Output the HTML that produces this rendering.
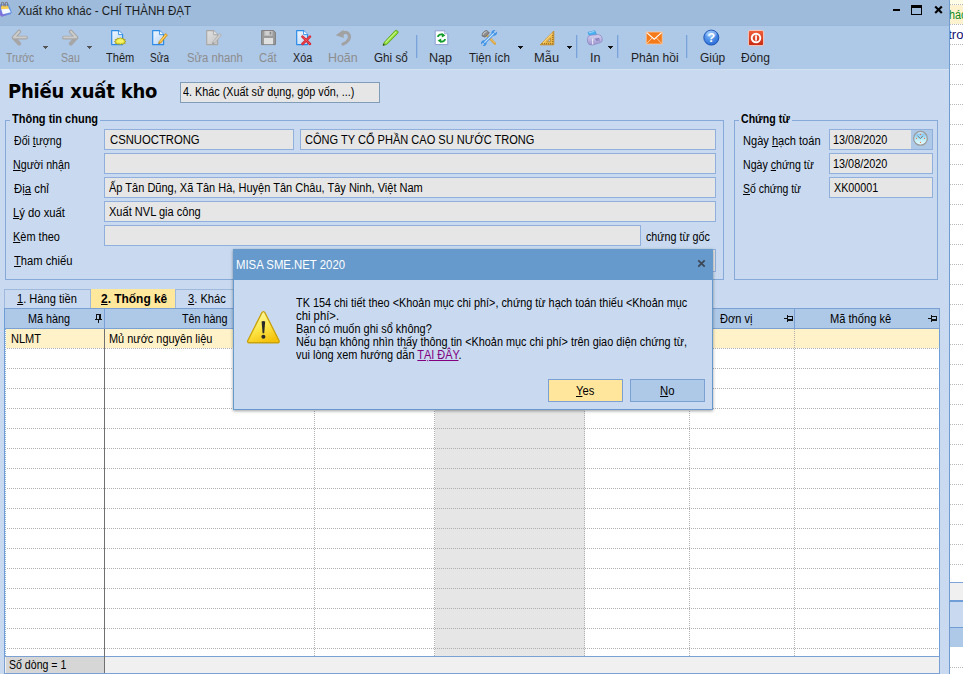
<!DOCTYPE html>
<html lang="vi"><head><meta charset="utf-8"><title>Xuất kho khác</title>
<style>
*{box-sizing:border-box;margin:0;padding:0}
html,body{width:963px;height:674px;overflow:hidden;background:#fff}
body{position:relative;font-family:"Liberation Sans",sans-serif;font-size:11px;color:#000}
.a{position:absolute;white-space:nowrap}
u{text-decoration:underline}
/* background window right */
#bgw{left:950px;top:0;width:13px;height:674px;background:#fff;overflow:hidden}
.dl{position:absolute;left:0;width:13px;height:1px;background-image:linear-gradient(90deg,#b9b9b9 1px,transparent 1px);background-size:2px 1px}
/* main window */
#win{left:0;top:0;width:950px;height:674px;background:#c9daf0;border-right:1px solid #6f9bd0}
#tb{left:0;top:0;width:949px;height:26px;background:#9ebbdc;border-bottom:1px solid #9ab8da}
#tool{left:0;top:26px;width:949px;height:44px;background:#aec8e8;border-bottom:1px solid #d3e1f3}
.tl{position:absolute;top:51px;transform-origin:0 0;font-size:12px;line-height:14px;color:#1e1e1e;white-space:nowrap;font-family:"Liberation Sans",sans-serif}
.tl.d{color:#8d8d8d}
.sep{position:absolute;top:35px;width:2px;height:23px;background:linear-gradient(90deg,#7aa3d9 50%,#9dbde6 50%)}
.dd{position:absolute;width:0;height:0;border-left:2.5px solid transparent;border-right:2.5px solid transparent;border-top:3px solid #333}
.ic{position:absolute;top:29px;width:18px;height:18px}
.inp{position:absolute;height:21px;background:#e6e6e6;border:1px solid #8fafdc;line-height:19px;padding-left:5px;white-space:nowrap;overflow:hidden}
.t{display:inline-block;font-size:12px;transform:scaleX(.917);transform-origin:0 50%;white-space:nowrap}
.tc{transform-origin:50% 50%}
.lb{position:absolute;font-size:12px;line-height:14px;white-space:nowrap;transform:scaleX(.917);transform-origin:0 0}
.gb{position:absolute;border:1px solid #85a9d9}
.gbl{position:absolute;font-weight:bold;font-size:12px;line-height:14px;transform:scaleX(.9);transform-origin:0 0;background:#c9daf0;padding:0 2px;white-space:nowrap}

.tab{height:20px;border:1px solid #9fb9dc;border-bottom:none;background:#c9daf0;font-size:12px;line-height:19px;text-align:center}
.tab.sel{background:#ffe79c;font-weight:bold;border-color:#ffe79c}

#grid{background:#fff;border-left:1px solid #6f9dd6;border-right:1px solid #6f9dd6}
.gh{position:absolute;top:308px;height:21px;background:#aec8e8;border-top:1px solid #7ba0d4;border-bottom:1px solid #7ba0d4;border-right:1px solid #7ba0d4;font-size:12px;line-height:18px;text-align:center;white-space:nowrap}
.hl{position:absolute;left:7px;width:932px;height:1px;background-image:linear-gradient(90deg,#b0b0b0 1px,transparent 1px);background-size:2px 1px}
.vl{position:absolute;top:329px;width:1px;height:327px;background-image:linear-gradient(180deg,#b0b0b0 1px,transparent 1px);background-size:1px 2px}
.cell{position:absolute;font-size:12px;line-height:14px;white-space:nowrap;transform:scaleX(.917);transform-origin:0 0}
#dlg{left:233px;top:249px;width:480px;height:161px;background:#c9daf0;border:1px solid #6699cc;box-shadow:0 1px 3px rgba(0,0,0,.38)}
#dlgt{left:233px;top:249px;width:480px;height:31px;background:#6699cc;color:#fff;font-size:12px;line-height:30px;padding-left:4px}
.msg{position:absolute;left:296px;font-size:12px;line-height:14px;white-space:nowrap;transform:scaleX(.917);transform-origin:0 0}
.btn{position:absolute;top:379px;height:23px;width:75px;border:1px solid #7ba0d4;line-height:21px;text-align:center}
.x{position:absolute;white-space:nowrap;transform-origin:0 0;font-family:"Liberation Sans",sans-serif}
</style></head><body>
<div class="a" id="bgw">
<div class="a" style="left:0;top:0;width:13px;height:4px;background:#fffde6"></div>
<div class="a" style="left:0;top:5px;width:13px;height:19px;background:#fff3cf"></div>
<div class="dl" style="top:4px"></div>
<div class="dl" style="top:24px"></div>
<div class="dl" style="top:44px"></div>
<div class="dl" style="top:64px"></div>
<div class="dl" style="top:84px"></div>
<div class="dl" style="top:104px"></div>
<div class="dl" style="top:124px"></div>
<div class="dl" style="top:144px"></div>
<div class="dl" style="top:164px"></div>
<div class="dl" style="top:184px"></div>
<div class="dl" style="top:204px"></div>
<div class="dl" style="top:224px"></div>
<div class="dl" style="top:244px"></div>
<div class="dl" style="top:264px"></div>
<div class="dl" style="top:284px"></div>
<div class="dl" style="top:304px"></div>
<div class="dl" style="top:324px"></div>
<div class="dl" style="top:344px"></div>
<div class="dl" style="top:364px"></div>
<div class="dl" style="top:384px"></div>
<div class="dl" style="top:404px"></div>
<div class="dl" style="top:424px"></div>
<div class="dl" style="top:444px"></div>
<div class="dl" style="top:464px"></div>
<div class="dl" style="top:484px"></div>
<div class="dl" style="top:504px"></div>
<div class="dl" style="top:524px"></div>
<div class="dl" style="top:544px"></div>
<div class="dl" style="top:564px"></div>
<div class="dl" style="top:584px"></div>
<div class="dl" style="top:667px"></div>
<div class="a" style="left:-0.7px;top:8px;font-size:12px;line-height:14px;color:#0a8a1e;transform:scaleX(.9);transform-origin:0 0">hác</div>
<div class="a" style="left:-1.8px;top:28px;font-size:13px;line-height:14px;color:#101070;transform:scaleX(1.0);transform-origin:0 0">tro</div>
<div class="a" style="left:0;top:582px;width:13px;height:18px;background:#f0f0f0;border-top:1px solid #7ba4d8"></div>
<div class="a" style="left:0;top:600px;width:13px;height:27px;background:#c9daf0;border-top:2px solid #6f9dd6"></div>
<div class="a" style="left:0;top:627px;width:13px;height:20px;background:#aec8e8;border-top:1px solid #6f9dd6"></div>
</div>
<div class="a" id="win"></div>
<div class="a" id="tb"></div>
<div class="a" id="tool"></div>
<svg width="0" height="0" style="position:absolute"><defs>
<linearGradient id="pg" x1="0" y1="0" x2="1" y2="1"><stop offset="0" stop-color="#f4f9ff"/><stop offset="1" stop-color="#b4d2f3"/></linearGradient>
<linearGradient id="pgd" x1="0" y1="0" x2="1" y2="1"><stop offset="0" stop-color="#e2e2e2"/><stop offset="1" stop-color="#c4c4c4"/></linearGradient>
<linearGradient id="arw" x1="0" y1="0" x2="0" y2="1"><stop offset="0" stop-color="#c9c9c9"/><stop offset="1" stop-color="#a2a2a2"/></linearGradient>
<radialGradient id="hp" cx="0.4" cy="0.3" r="0.8"><stop offset="0" stop-color="#7db8ff"/><stop offset="1" stop-color="#1e62d0"/></radialGradient>
<linearGradient id="rd" x1="0" y1="0" x2="0" y2="1"><stop offset="0" stop-color="#f0603a"/><stop offset="1" stop-color="#c62a12"/></linearGradient>
<linearGradient id="prn" x1="0" y1="0" x2="0" y2="1"><stop offset="0" stop-color="#d6d2f0"/><stop offset="1" stop-color="#9c96cf"/></linearGradient>
</defs></svg>
<!-- back -->
<svg class="a" style="left:11px;top:29px" width="18" height="18" viewBox="0 0 18 18"><path d="M15 8.6 H4 M8.2 2.6 L2.6 8.6 L8.2 14.6" fill="none" stroke="#a6a6a6" stroke-width="3.9" stroke-linecap="round" stroke-linejoin="round"/><path d="M15 8.3 H4 M8.2 2.6 L2.8 8.4" fill="none" stroke="#cdcdcd" stroke-width="1.8" stroke-linecap="round" stroke-linejoin="round"/></svg>
<!-- forward -->
<svg class="a" style="left:61px;top:29px" width="18" height="18" viewBox="0 0 18 18"><path d="M3 8.6 H14 M9.8 2.6 L15.4 8.6 L9.8 14.6" fill="none" stroke="#a6a6a6" stroke-width="3.9" stroke-linecap="round" stroke-linejoin="round"/><path d="M3 8.3 H14 M9.8 2.6 L15.2 8.4" fill="none" stroke="#cdcdcd" stroke-width="1.8" stroke-linecap="round" stroke-linejoin="round"/></svg>
<!-- them -->
<svg class="a" style="left:110px;top:29px" width="18" height="18" viewBox="0 0 18 18"><path d="M1.7 1.7 H8.6 L12.6 5.6 V15.6 H1.7 Z" fill="url(#pg)" stroke="#2b8be6" stroke-width="1.2" stroke-linejoin="round"/><path d="M8.6 1.7 V5.6 H12.6" fill="#fff" stroke="#2b8be6" stroke-width="0.9"/><path d="M10.3 7.6 l1 1.6 1.8-.8 .1 1.9 1.9.1-.8 1.7 1.5 1-1.5 1 .7 1.6-1.8 0-.3 1.4-1.6-.9-1 1.2-1-1.2-1.6.9-.3-1.4-1.8 0 .7-1.6-1.5-1 1.5-1-.8-1.7 1.9-.1 .1-1.9 1.8.8z" transform="translate(-0.6,3.1) scale(1.05,0.72)" fill="#eee94a" stroke="#a59c10" stroke-width="0.9" stroke-linejoin="round"/><ellipse cx="10.2" cy="11.9" rx="3" ry="1.6" fill="#f8f46a"/></svg>
<!-- sua -->
<svg class="a" style="left:151px;top:29px" width="18" height="18" viewBox="0 0 18 18"><path d="M1.7 1.7 H8.6 L12.6 5.6 V15.6 H1.7 Z" fill="url(#pg)" stroke="#2b8be6" stroke-width="1.2" stroke-linejoin="round"/><path d="M8.6 1.7 V5.6 H12.6" fill="#fff" stroke="#2b8be6" stroke-width="0.9"/><path d="M8.2 12.6 L14.6 4.6 L16.4 6 L10 13.8 L7.6 14.8 Z" fill="#f5b630" stroke="#c48a10" stroke-width="0.7" stroke-linejoin="round"/><path d="M9.2 12.6 L15 5.6" stroke="#ffe08a" stroke-width="0.8"/><path d="M7.6 14.8 l.3-1.2 .8 .7z" fill="#333"/></svg>
<!-- sua nhanh (disabled) -->
<svg class="a" style="left:205px;top:29px" width="18" height="18" viewBox="0 0 18 18"><path d="M1.7 1.7 H8.6 L12.6 5.6 V15.6 H1.7 Z" fill="url(#pgd)" stroke="#a8a8a8" stroke-width="1.2" stroke-linejoin="round"/><path d="M8.6 1.7 V5.6 H12.6" fill="#e6e6e6" stroke="#a8a8a8" stroke-width="0.9"/><path d="M8.2 12.6 L14.6 4.6 L16.4 6 L10 13.8 L7.6 14.8 Z" fill="#cfcfcf" stroke="#a6a6a6" stroke-width="0.7" stroke-linejoin="round"/><path d="M7.6 14.8 l.3-1.2 .8 .7z" fill="#555"/></svg>
<!-- cat (floppy, disabled) -->
<svg class="a" style="left:260px;top:29px" width="18" height="18" viewBox="0 0 18 18"><path d="M1.6 1.6 H13.6 L15.4 3.2 V15.6 H1.6 Z" fill="#9b9b9b" stroke="#7f7f7f" stroke-width="1"/><rect x="4" y="2" width="8.4" height="4.6" fill="#d0d0d0"/><rect x="9.6" y="2.6" width="1.8" height="3" fill="#8a8a8a"/><rect x="4" y="9" width="9" height="6.2" fill="#e0e0e0"/><rect x="4.2" y="2" width="1" height="4.6" fill="#b0b0b0"/></svg>
<!-- xoa -->
<svg class="a" style="left:295px;top:29px" width="18" height="18" viewBox="0 0 18 18"><path d="M1.7 1.7 H8.6 L12.6 5.6 V15.6 H1.7 Z" fill="url(#pg)" stroke="#2b8be6" stroke-width="1.2" stroke-linejoin="round"/><path d="M8.6 1.7 V5.6 H12.6" fill="#fff" stroke="#2b8be6" stroke-width="0.9"/><path d="M7.4 7.6 L15 15 M15 7.6 L7.4 15" stroke="#d8232f" stroke-width="2.5" stroke-linecap="round"/><path d="M7.6 7.8 L14.8 14.8 M14.8 7.8 L7.6 14.8" stroke="#f0646c" stroke-width="0.8" stroke-linecap="round"/></svg>
<!-- hoan (undo, disabled) -->
<svg class="a" style="left:335px;top:29px" width="18" height="18" viewBox="0 0 18 18"><path d="M8 15.2 C14.4 12.4 16 7 13 4.4 C11 2.8 8.2 3.6 6.4 5.2" fill="none" stroke="#a2a2a2" stroke-width="3.1" stroke-linecap="round"/><path d="M0.8 6.2 L8.4 0.8 L8.8 9 Z" fill="#a2a2a2"/></svg>
<!-- ghi so (green pencil) -->
<svg class="a" style="left:382px;top:29px" width="18" height="18" viewBox="0 0 18 18"><path d="M2.4 13.2 L13.2 1.6 Q14.4 0.8 15.6 2 Q16.6 3.2 15.8 4.2 L4.8 15.4 L1 16.4 Z" fill="#8fdc3a" stroke="#5aa51c" stroke-width="0.9" stroke-linejoin="round"/><path d="M3.6 13.6 L14 2.8" stroke="#c9f58e" stroke-width="1.1"/><path d="M1 16.4 l.5-1.8 1.3 1.3z" fill="#222"/></svg>
<!-- nap -->
<svg class="a" style="left:433px;top:29px" width="18" height="18" viewBox="0 0 18 18"><path d="M2.2 1.8 H11.6 L14.8 4.8 V15.6 H2.2 Z" fill="#fdfeff" stroke="#8f9fd0" stroke-width="1" stroke-linejoin="round"/><path d="M11.6 1.8 V4.8 H14.8" fill="#cfe0f8" stroke="#8f9fd0" stroke-width="0.7"/><path d="M5 8 C5 5.6 8.4 4.6 10.4 6.2" fill="none" stroke="#149c2c" stroke-width="1.9"/><path d="M8.8 4 L12.4 6.6 L8.8 8.6 Z" fill="#149c2c"/><path d="M12 10 C12 12.4 8.6 13.4 6.6 11.8" fill="none" stroke="#149c2c" stroke-width="1.9"/><path d="M8.2 14 L4.6 11.4 L8.2 9.4 Z" fill="#149c2c"/></svg>
<!-- tien ich -->
<svg class="a" style="left:480px;top:29px" width="18" height="18" viewBox="0 0 18 18"><path d="M7 6.4 L15 14.6" stroke="#d9a23a" stroke-width="2.3" stroke-linecap="round"/><path d="M7.2 6.2 L15 14.2" stroke="#f6d68a" stroke-width="0.7"/><path d="M2 6.8 Q2.2 2.6 6.8 1.4 L9.4 4 L5 8.2 Z" fill="#8c8c8c" stroke="#5c5c5c" stroke-width="0.7" stroke-linejoin="round"/><path d="M3 5.8 Q3.8 3.2 6.6 2.6" stroke="#dcdcdc" stroke-width="0.9" fill="none"/><g transform="rotate(-45 9 9)"><path d="M1.2 9 H16.8" stroke="#3f93e6" stroke-width="3"/><circle cx="1.6" cy="9" r="2.7" fill="#3f93e6"/><circle cx="16.4" cy="9" r="2.7" fill="#3f93e6"/><path d="M2.4 9 H15.6" stroke="#d4ebff" stroke-width="1.2"/><rect x="-2" y="8" width="3.6" height="2" fill="#aec8e8"/><rect x="16.4" y="8" width="3.6" height="2" fill="#aec8e8"/></g></svg>
<!-- mau -->
<svg class="a" style="left:539px;top:29px" width="18" height="18" viewBox="0 0 18 18"><path d="M14.8 2 V15.8 H1.2 Z M11.6 9 V12.8 H7.8 Z" fill="#edbd52" fill-rule="evenodd" stroke="#c58a20" stroke-width="0.9" stroke-linejoin="round"/><path d="M3.6 15.4v-1.4M5.6 15.4v-1.4M7.6 15.4v-1.4M9.6 15.4v-1.4M11.6 15.4v-1.4M13.4 15.4v-1.4M14.4 4.6h-1.4M14.4 6.6h-1.4M14.4 8.6h-1.4M14.4 10.6h-1.4M14.4 12.6h-1.4" stroke="#7a4e08" stroke-width="0.7"/><path d="M13.6 4 L3.6 14.2" stroke="#fbe29a" stroke-width="0.9"/></svg>
<!-- in -->
<svg class="a" style="left:586px;top:29px" width="18" height="18" viewBox="0 0 18 18"><path d="M2 3.4 L8.8 1.8 L10.6 6 L4 8 Z" fill="#49b0f2" stroke="#2a8fd8" stroke-width="0.6"/><path d="M2.8 3.8 L8.4 2.4" stroke="#a6defc" stroke-width="0.9"/><path d="M1.4 9.6 Q1.6 6.4 5.2 6.2 L12.4 5.6 Q15.8 6 16.2 9.4 L16.2 11.6 Q15.8 13.4 13.8 13.8 L6.6 16 Q2.4 16.4 1.6 13.2 Z" fill="url(#prn)" stroke="#8a84c0" stroke-width="0.7"/><path d="M6.8 9.4 Q6.2 12.4 6.8 15.6" stroke="#efeefc" stroke-width="1" fill="none"/><path d="M9 10.2 L13 9.4 V12.4" stroke="#7e78b8" stroke-width="0.9" fill="none"/><circle cx="11" cy="11" r=".7" fill="#4a4690"/></svg>
<!-- phan hoi -->
<svg class="a" style="left:645px;top:29px" width="18" height="18" viewBox="0 0 18 18"><rect x="1.2" y="3" width="16" height="12" fill="#f57a1a" stroke="#f9c9a0" stroke-width="0.8"/><path d="M1.8 3.6 L9.2 10.2 L16.6 3.6" fill="none" stroke="#fff" stroke-width="1.1"/><path d="M1.8 14.4 L7 9 M16.6 14.4 L11.4 9" stroke="#ffd9b8" stroke-width="0.9"/></svg>
<!-- giup -->
<svg class="a" style="left:702px;top:28px" width="19" height="19" viewBox="0 0 19 19"><circle cx="9.3" cy="9.6" r="7.5" fill="url(#hp)" stroke="#174fae" stroke-width="0.9"/><ellipse cx="9.3" cy="6" rx="5.2" ry="3.4" fill="#fff" opacity=".28"/><text x="9.4" y="14" text-anchor="middle" font-family="Liberation Sans,sans-serif" font-weight="bold" font-size="12.5" fill="#fff">?</text></svg>
<!-- dong -->
<svg class="a" style="left:747px;top:29px" width="18" height="18" viewBox="0 0 18 18"><rect x="1.4" y="1.4" width="15.2" height="15.2" rx="1.6" fill="url(#rd)" stroke="#f3c9bc" stroke-width="1"/><circle cx="9" cy="9" r="4.3" fill="none" stroke="#fff" stroke-width="1.9"/><rect x="8.2" y="6.4" width="1.7" height="5.2" fill="#fff"/></svg>
<!-- window controls -->
<div class="a" style="left:893px;top:9px;width:7px;height:2px;background:#000"></div>
<div class="a" style="left:911px;top:5px;width:11px;height:10px;border:1px solid #000;border-top-width:3px"></div>
<svg class="a" style="left:933px;top:4px" width="11" height="11" viewBox="0 0 11 11"><path d="M2.2 2.4 L8.8 9 M8.8 2.4 L2.2 9" stroke="#000" stroke-width="2.1"/></svg>
<!-- app icon (notepad) -->
<svg class="a" style="left:0;top:0" width="14" height="19" viewBox="0 0 14 19"><defs><linearGradient id="np" x1="1" y1="0" x2="0" y2="1"><stop offset="0" stop-color="#4f9df0"/><stop offset="0.6" stop-color="#6f86e0"/><stop offset="1" stop-color="#8a5fd2"/></linearGradient></defs><path d="M-1 4.2 L8.8 4.2 L11.9 12.4 L10.6 14.2 L1.6 16.8 L-1 14 Z" fill="url(#np)"/><path d="M0.9 5.6 L8.2 5.6 L8.9 9 L1.2 9.4 Z" fill="#f8cf50"/><path d="M1.2 9.3 L8.9 8.7 L10.9 12.3 L2.9 14.2 Z" fill="#f5f9ff"/><path d="M1.4 6.6 V3.6 Q1.4 2.2 2.6 2.2 Q3.8 2.2 3.8 3.6 V6.2 M5.2 6.4 V3.6 Q5.2 2.2 6.4 2.2 Q7.6 2.2 7.6 3.6 V6.2" fill="none" stroke="#7c7c88" stroke-width="1.1"/></svg>

<div class="sep" style="left:416px"></div>
<div class="sep" style="left:576px"></div>
<div class="sep" style="left:617px"></div>
<div class="sep" style="left:686px"></div>
<svg class="a" style="left:43px;top:46px" width="5" height="3" viewBox="0 0 5 3" shape-rendering="crispEdges"><path d="M0 0h5v1h-5zM1 1h3v1h-3zM2 2h1v1h-1z" fill="#555"/></svg>
<svg class="a" style="left:87px;top:46px" width="5" height="3" viewBox="0 0 5 3" shape-rendering="crispEdges"><path d="M0 0h5v1h-5zM1 1h3v1h-3zM2 2h1v1h-1z" fill="#555"/></svg>
<svg class="a" style="left:518px;top:46px" width="5" height="3" viewBox="0 0 5 3" shape-rendering="crispEdges"><path d="M0 0h5v1h-5zM1 1h3v1h-3zM2 2h1v1h-1z" fill="#111"/></svg>
<svg class="a" style="left:567px;top:46px" width="5" height="3" viewBox="0 0 5 3" shape-rendering="crispEdges"><path d="M0 0h5v1h-5zM1 1h3v1h-3zM2 2h1v1h-1z" fill="#111"/></svg>
<svg class="a" style="left:608px;top:46px" width="5" height="3" viewBox="0 0 5 3" shape-rendering="crispEdges"><path d="M0 0h5v1h-5zM1 1h3v1h-3zM2 2h1v1h-1z" fill="#111"/></svg>
<div class="a" id="h1" style="left:8px;top:77.5px;font:bold 20px/26px 'DejaVu Sans Condensed','DejaVu Sans',sans-serif;letter-spacing:-0.2px">Phiếu xuất kho</div>
<div class="inp" style="left:180px;top:82px;width:200px;border-color:#7f9db9"></div>
<div class="gb" style="left:5px;top:120px;width:719px;height:160px"></div>
<div class="a" style="left:10px;top:118px;width:90px;height:5px;background:#c9daf0"></div>
<div class="gb" style="left:734px;top:120px;width:204px;height:160px"></div>
<div class="a" style="left:739px;top:118px;width:53px;height:5px;background:#c9daf0"></div>
<div class="inp" style="left:104px;top:129px;width:190px;height:21px"></div>
<div class="inp" style="left:300px;top:129px;width:416px;height:21px"></div>
<div class="inp" style="left:104px;top:153px;width:612px;height:21px"></div>
<div class="inp" style="left:104px;top:177px;width:612px;height:21px"></div>
<div class="inp" style="left:104px;top:201px;width:612px;height:21px"></div>
<div class="inp" style="left:104px;top:225px;width:537px;height:21px"></div>
<div class="inp" style="left:300px;top:249px;width:416px;height:23px"></div>
<div class="inp" style="left:829px;top:129px;width:104px;height:21px"></div>
<div class="inp" style="left:829px;top:153px;width:104px;height:21px"></div>
<div class="inp" style="left:829px;top:177px;width:104px;height:21px"></div>
<div class="a" style="left:911px;top:130px;width:21px;height:19px;background:#aec8e8"></div>
<svg class="a" style="left:911px;top:129px" width="19" height="19" viewBox="0 0 19 19"><defs><linearGradient id="ck" x1="0" y1="0" x2="0" y2="1"><stop offset="0" stop-color="#f4fbff"/><stop offset="0.22" stop-color="#8ecbf2"/><stop offset="0.6" stop-color="#bfeefa"/><stop offset="1" stop-color="#e8fdff"/></linearGradient></defs><circle cx="9.5" cy="9.3" r="6.9" fill="url(#ck)" stroke="#9c9c9c" stroke-width="1.3"/><path d="M6.4 6.8 L9.5 9.6 L11.8 6.9" stroke="#6b7b80" stroke-width="1" fill="none"/><circle cx="9.5" cy="5.3" r=".65" fill="#ff6a2a"/><circle cx="9.5" cy="13.3" r=".65" fill="#ff6a2a"/><circle cx="5.5" cy="9.3" r=".65" fill="#ff6a2a"/><circle cx="13.5" cy="9.3" r=".65" fill="#ff6a2a"/></svg>
<div class="a tab" style="left:4px;top:289px;width:87px"></div>
<div class="a tab sel" style="left:91px;top:289px;width:84px"></div>
<div class="a tab" style="left:175px;top:289px;width:63px"></div>
<div class="a" id="grid" style="left:4px;top:308px;width:936px;height:366px"></div>
<div class="vl" style="left:5px;background-image:linear-gradient(180deg,#8fb0dc 1px,transparent 1px)"></div>
<div class="a" style="left:435px;top:329px;width:150px;height:327px;background:#e6e6e6"></div>
<div class="a" style="left:6px;top:329px;width:933px;height:19px;background:#fff2c8"></div>
<div class="gh" style="left:5px;width:100px"></div>
<div class="gh" style="left:105px;width:210px"></div>
<div class="gh" style="left:315px;width:120px"></div>
<div class="gh" style="left:435px;width:150px"></div>
<div class="gh" style="left:585px;width:105px"></div>
<div class="gh" style="left:690px;width:105px"></div>
<div class="gh" style="left:795px;width:145px"></div>
<div class="hl" style="top:348px"></div>
<div class="hl" style="top:368px"></div>
<div class="hl" style="top:388px"></div>
<div class="hl" style="top:408px"></div>
<div class="hl" style="top:428px"></div>
<div class="hl" style="top:448px"></div>
<div class="hl" style="top:468px"></div>
<div class="hl" style="top:488px"></div>
<div class="hl" style="top:508px"></div>
<div class="hl" style="top:528px"></div>
<div class="hl" style="top:548px"></div>
<div class="hl" style="top:568px"></div>
<div class="hl" style="top:588px"></div>
<div class="hl" style="top:608px"></div>
<div class="hl" style="top:628px"></div>
<div class="hl" style="top:648px"></div>
<div class="vl" style="left:314px"></div>
<div class="vl" style="left:434px"></div>
<div class="vl" style="left:584px"></div>
<div class="vl" style="left:689px"></div>
<div class="vl" style="left:794px"></div>
<svg class="a" style="left:95px;top:314px" width="7" height="9" viewBox="0 0 7 9" shape-rendering="crispEdges"><path d="M1 0h5v1h-5zM1 1h1v4h-1zM4 1h2v4h-2zM0 5h7v1h-7zM3 6h1v3h-1z" fill="#111"/></svg>
<svg class="a" style="left:784px;top:315px" width="9" height="7" viewBox="0 0 9 7" shape-rendering="crispEdges"><path d="M8 1h1v5h-1zM4 1h4v1h-4zM4 4h4v2h-4zM3 0h1v7h-1zM0 3h3v1h-3z" fill="#111"/></svg>
<svg class="a" style="left:928px;top:315px" width="9" height="7" viewBox="0 0 9 7" shape-rendering="crispEdges"><path d="M8 1h1v5h-1zM4 1h4v1h-4zM4 4h4v2h-4zM3 0h1v7h-1zM0 3h3v1h-3z" fill="#111"/></svg>
<div class="a" style="left:4px;top:656px;width:936px;height:18px;background:#f0f0f0;border:1px solid #7ba0d4"></div>
<div class="a" style="left:6px;top:657px;width:98px;height:16px;background:#d6d6d6"></div>
<div class="a" style="left:104px;top:329px;width:1px;height:344px;background:#707070"></div>
<div class="x" style="left:5.58px;top:51.0px;font-size:12px;line-height:14px;color:#8d8d8d;transform:scaleX(0.8620)">Trước</div>
<div class="x" style="left:60.86px;top:51.0px;font-size:12px;line-height:14px;color:#8d8d8d;transform:scaleX(0.8800)">Sau</div>
<div class="x" style="left:105.67px;top:51.0px;font-size:12px;line-height:14px;color:#1e1e1e;transform:scaleX(0.9210)">Thêm</div>
<div class="x" style="left:149.58px;top:51.0px;font-size:12px;line-height:14px;color:#1e1e1e;transform:scaleX(0.8360)">Sửa</div>
<div class="x" style="left:186.53px;top:51.0px;font-size:12px;line-height:14px;color:#8d8d8d;transform:scaleX(0.9408)">Sửa nhanh</div>
<div class="x" style="left:258.83px;top:51.0px;font-size:12px;line-height:14px;color:#8d8d8d;transform:scaleX(0.9389)">Cất</div>
<div class="x" style="left:293.17px;top:51.0px;font-size:12px;line-height:14px;color:#1e1e1e;transform:scaleX(0.9035)">Xóa</div>
<div class="x" style="left:328.47px;top:51.0px;font-size:12px;line-height:14px;color:#8d8d8d;transform:scaleX(1.0333)">Hoãn</div>
<div class="x" style="left:373.91px;top:51.0px;font-size:12px;line-height:14px;color:#1e1e1e;transform:scaleX(0.9748)">Ghi sổ</div>
<div class="x" style="left:429.35px;top:51.0px;font-size:12px;line-height:14px;color:#1e1e1e;transform:scaleX(1.0488)">Nạp</div>
<div class="x" style="left:469.06px;top:51.0px;font-size:12px;line-height:14px;color:#1e1e1e;transform:scaleX(0.9673)">Tiện ích</div>
<div class="x" style="left:534.33px;top:51.0px;font-size:12px;line-height:14px;color:#1e1e1e;transform:scaleX(1.0744)">Mẫu</div>
<div class="x" style="left:589.65px;top:51.0px;font-size:12px;line-height:14px;color:#1e1e1e;transform:scaleX(1.0545)">In</div>
<div class="x" style="left:630.99px;top:51.0px;font-size:12px;line-height:14px;color:#1e1e1e;transform:scaleX(1.0066)">Phản hồi</div>
<div class="x" style="left:699.70px;top:51.0px;font-size:12px;line-height:14px;color:#1e1e1e;transform:scaleX(0.9959)">Giúp</div>
<div class="x" style="left:741.30px;top:51.0px;font-size:12px;line-height:14px;color:#1e1e1e;transform:scaleX(1.0071)">Đóng</div>
<div class="x" style="left:18.06px;top:4.0px;font-size:12px;line-height:14px;color:#1b1b1b;transform:scaleX(0.9662)">Xuất kho khác - CHÍ THÀNH ĐẠT</div>
<div class="x" style="left:183.07px;top:85.0px;font-size:12px;line-height:14px;transform:scaleX(0.9015)">4. Khác (Xuất sử dụng, góp vốn, ...)</div>
<div class="x" style="left:14.10px;top:134.0px;font-size:12px;line-height:14px;transform:scaleX(0.8808)">Đối <u>t</u>ượng</div>
<div class="x" style="left:13.21px;top:158.0px;font-size:12px;line-height:14px;transform:scaleX(0.8900)"><u>N</u>gười nhận</div>
<div class="x" style="left:14.20px;top:182.0px;font-size:12px;line-height:14px;transform:scaleX(0.9479)">Đị<u>a</u> chỉ</div>
<div class="x" style="left:13.26px;top:206.0px;font-size:12px;line-height:14px;transform:scaleX(0.9382)"><u>L</u>ý do xuất</div>
<div class="x" style="left:13.29px;top:230.0px;font-size:12px;line-height:14px;transform:scaleX(0.9140)"><u>K</u>èm theo</div>
<div class="x" style="left:13.97px;top:254.0px;font-size:12px;line-height:14px;transform:scaleX(0.9328)"><u>T</u>ham chiếu</div>
<div class="x" style="left:645.65px;top:230.0px;font-size:12px;line-height:14px;transform:scaleX(0.8936)">chứng từ gốc</div>
<div class="x" style="left:742.78px;top:134.0px;font-size:12px;line-height:14px;transform:scaleX(0.9228)">Ngày <u>h</u>ạch toán</div>
<div class="x" style="left:742.81px;top:158.0px;font-size:12px;line-height:14px;transform:scaleX(0.8851)">Ngày <u>c</u>hứng từ</div>
<div class="x" style="left:742.57px;top:182.0px;font-size:12px;line-height:14px;transform:scaleX(0.8697)"><u>S</u>ố chứng từ</div>
<div class="x" style="left:109.53px;top:133.0px;font-size:12px;line-height:14px;transform:scaleX(0.9404)">CSNUOCTRONG</div>
<div class="x" style="left:305.04px;top:133.0px;font-size:12px;line-height:14px;transform:scaleX(0.9203)">CÔNG TY CỔ PHẦN CAO SU NƯỚC TRONG</div>
<div class="x" style="left:109.00px;top:181.0px;font-size:12px;line-height:14px;transform:scaleX(0.9182)">Ấp Tân Dũng, Xã Tân Hà, Huyện Tân Châu, Tây Ninh, Việt Nam</div>
<div class="x" style="left:108.77px;top:205.0px;font-size:12px;line-height:14px;transform:scaleX(0.9208)">Xuất NVL gia công</div>
<div class="x" style="left:833.09px;top:133.0px;font-size:12px;line-height:14px;transform:scaleX(0.9060)">13/08/2020</div>
<div class="x" style="left:833.09px;top:157.0px;font-size:12px;line-height:14px;transform:scaleX(0.9060)">13/08/2020</div>
<div class="x" style="left:833.78px;top:181.0px;font-size:12px;line-height:14px;transform:scaleX(0.8948)">XK00001</div>
<div class="x" style="left:12.07px;top:112.0px;font-size:12px;line-height:14px;font-weight:bold;transform:scaleX(0.9161)">Thông tin chung</div>
<div class="x" style="left:740.96px;top:112.0px;font-size:12px;line-height:14px;font-weight:bold;transform:scaleX(0.8818)">Chứng từ</div>
<div class="x" style="left:17.18px;top:292.0px;font-size:12px;line-height:14px;transform:scaleX(0.9238)"><u>1</u>. Hàng tiền</div>
<div class="x" style="left:100.60px;top:292.0px;font-size:12px;line-height:14px;font-weight:bold;transform:scaleX(0.9932)"><u>2</u>. Thống kê</div>
<div class="x" style="left:187.54px;top:292.0px;font-size:12px;line-height:14px;transform:scaleX(0.9283)"><u>3</u>. Khác</div>
<div class="x" style="left:28.00px;top:312.0px;font-size:12px;line-height:14px;transform:scaleX(0.9022)">Mã hàng</div>
<div class="x" style="left:181.58px;top:312.0px;font-size:12px;line-height:14px;transform:scaleX(0.8985)">Tên hàng</div>
<div class="x" style="left:720.20px;top:312.0px;font-size:12px;line-height:14px;transform:scaleX(0.9188)">Đơn vị</div>
<div class="x" style="left:830.17px;top:312.0px;font-size:12px;line-height:14px;transform:scaleX(0.9256)">Mã thống kê</div>
<div class="x" style="left:10.58px;top:332.0px;font-size:12px;line-height:14px;transform:scaleX(0.9206)">NLMT</div>
<div class="x" style="left:109.49px;top:332.0px;font-size:12px;line-height:14px;transform:scaleX(0.9121)">Mủ nước nguyên liệu</div>
<div class="x" style="left:8.86px;top:658.0px;font-size:12px;line-height:14px;transform:scaleX(0.8813)">Số dòng = 1</div>
<div class="a" id="dlg"></div>
<div class="a" id="dlgt"></div>
<svg class="a" style="left:697px;top:259px" width="9" height="9" viewBox="0 0 9 9"><path d="M1.3 1.3 L7.7 7.7 M7.7 1.3 L1.3 7.7" stroke="#3c4654" stroke-width="1.7"/></svg>
<div class="btn" style="left:548px;background:#ffe69c"></div>
<div class="btn" style="left:630px;background:#aec8e8"></div>
<svg class="a" style="left:246px;top:309px" width="35" height="36" viewBox="0 0 35 35" preserveAspectRatio="none"><defs><linearGradient id="wg" x1="0.2" y1="0" x2="0.6" y2="1"><stop offset="0" stop-color="#fffbb0"/><stop offset="0.55" stop-color="#fde64a"/><stop offset="1" stop-color="#f4c20a"/></linearGradient></defs><path d="M17.4 2.6 Q18.4 2.6 19 3.8 L33 30.6 Q33.8 32.6 31.8 32.8 L3.2 32.8 Q1 32.6 1.8 30.6 L15.8 3.8 Q16.4 2.6 17.4 2.6 Z" fill="url(#wg)" stroke="#c9a10a" stroke-width="1.3" stroke-linejoin="round"/><path d="M15.6 12.2 Q17.4 11 19.2 12.2 L18.2 23.6 H16.6 Z" fill="#2a2a2a"/><circle cx="17.4" cy="27" r="2" fill="#2a2a2a"/></svg>
<div class="x" style="left:235.75px;top:258.0px;font-size:12px;line-height:14px;color:#fff;transform:scaleX(0.9468)">MISA SME.NET 2020</div>
<div class="x" style="left:295.77px;top:296.0px;font-size:12px;line-height:14px;transform:scaleX(0.9057)">TK 154 chi tiết theo &lt;Khoản mục chi phí&gt;, chứng từ hạch toán thiếu &lt;Khoản mục</div>
<div class="x" style="left:295.53px;top:309.0px;font-size:12px;line-height:14px;transform:scaleX(0.9424)">chi phí&gt;.</div>
<div class="x" style="left:295.89px;top:322.0px;font-size:12px;line-height:14px;transform:scaleX(0.9125)">Bạn có muốn ghi sổ không?</div>
<div class="x" style="left:295.89px;top:335.0px;font-size:12px;line-height:14px;transform:scaleX(0.9056)">Nếu bạn không nhìn thấy thông tin &lt;Khoản mục chi phí&gt; trên giao diện chứng từ,</div>
<div class="x" style="left:296.00px;top:348.0px;font-size:12px;line-height:14px;transform:scaleX(0.9114)">vui lòng xem hướng dẫn <span style="color:#800080;text-decoration:underline">TẠI ĐÂY</span>.</div>
<div class="x" style="left:576.17px;top:384.0px;font-size:12px;line-height:14px;transform:scaleX(0.9316)"><u>Y</u>es</div>
<div class="x" style="left:660.06px;top:384.0px;font-size:12px;line-height:14px;transform:scaleX(0.9429)"><u>N</u>o</div>
</body></html>
